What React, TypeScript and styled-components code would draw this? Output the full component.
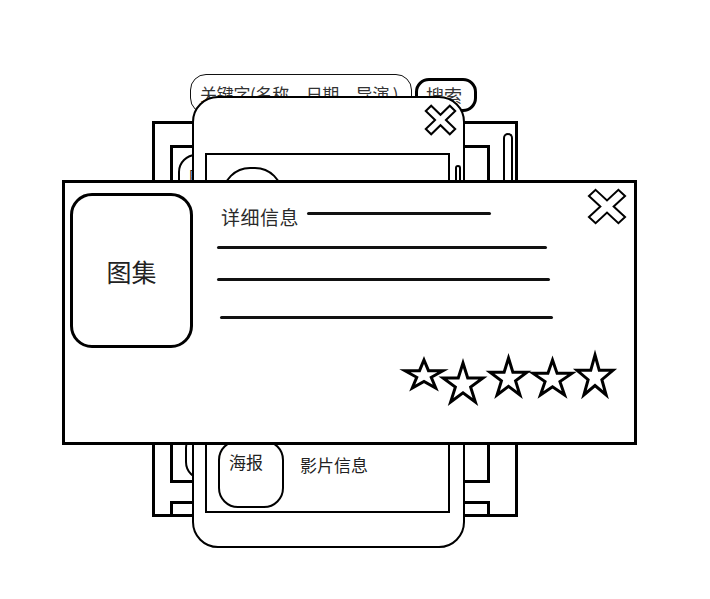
import React from "react";
import styled, { createGlobalStyle } from "styled-components";

const Global = createGlobalStyle`
  html, body { margin: 0; padding: 0; background: #fff; }
  body {
    font-family: "Noto Sans CJK SC", "Noto Sans", sans-serif;
    color: #222;
  }
`;

const Stage = styled.div`
  position: relative;
  width: 710px;
  height: 599px;
  overflow: hidden;
  background: #fff;
`;

/* ---------- base page (layer 1) ---------- */
const Page = styled.div`
  display: flex;
  flex-direction: column;
  padding-top: 74px;
`;

const SearchRow = styled.div`
  display: flex;
  align-items: flex-start;
  gap: 3px;
  margin-left: 190px;
`;

const SearchInput = styled.div`
  width: 222px;
  height: 40px;
  box-sizing: border-box;
  border: 1px solid #111;
  border-radius: 16px;
  padding-left: 9px;
  font-size: 17px;
  letter-spacing: -0.3px;
  line-height: 38px;
  white-space: nowrap;
  overflow: hidden;
  color: #333;
`;

const SearchButton = styled.div`
  margin-top: 4px;
  width: 62px;
  height: 34px;
  box-sizing: border-box;
  border: 3px solid #000;
  border-radius: 14px;
  font-size: 18px;
  line-height: 28px;
  padding-left: 8px;
  color: #333;
`;

const Frame = styled.div`
  margin: 7px 0 0 152px;
  width: 366px;
  height: 396px;
  box-sizing: border-box;
  border: 3px solid #000;
  display: flex;
  align-items: flex-start;
  padding: 21px 0 0 15px;
  overflow: hidden;
`;

const ResultList = styled.div`
  display: flex;
  flex-direction: column;
  gap: 18px;
  width: 320px;
  flex-shrink: 0;
`;

const ResultItem = styled.div<{ $h: number }>`
  height: ${(p) => p.$h}px;
  flex-shrink: 0;
  box-sizing: border-box;
  border: 3px solid #000;
  display: flex;
  flex-direction: column;
  align-items: flex-start;
`;

const Scrollbar = styled.div<{ $w: number; $h: number; $ml: number; $mt: number }>`
  flex-shrink: 0;
  width: ${(p) => p.$w}px;
  height: ${(p) => p.$h}px;
  margin-left: ${(p) => p.$ml}px;
  margin-top: ${(p) => p.$mt}px;
  box-sizing: border-box;
  border: 2px solid #000;
  border-bottom: none;
  border-radius: ${(p) => p.$w / 2}px ${(p) => p.$w / 2}px 0 0;
`;

const Poster = styled.div<{
  $w: number;
  $h: number;
  $ml: number;
  $mt: number;
  $r: number;
  $fs: number;
  $auto?: boolean;
}>`
  flex-shrink: 0;
  width: ${(p) => p.$w}px;
  height: ${(p) => p.$h}px;
  margin-left: ${(p) => p.$ml}px;
  margin-top: ${(p) => (p.$auto ? "auto" : `${p.$mt}px`)};
  box-sizing: border-box;
  border: 2px solid #000;
  border-radius: ${(p) => p.$r}px;
  background: #fff;
  font-size: ${(p) => p.$fs}px;
  line-height: 22px;
  padding: 9px 0 0 9px;
  color: #222;
`;

/* ---------- result modal (layer 2) ---------- */
const ResultModal = styled.div`
  position: absolute;
  left: 192px;
  top: 96px;
  width: 273px;
  height: 452px;
  box-sizing: border-box;
  border: 2px solid #000;
  border-radius: 26px;
  background: #fff;
  display: flex;
  flex-direction: column;
`;

const ModalHeader = styled.div<{ $pad: string }>`
  display: flex;
  justify-content: flex-end;
  padding: ${(p) => p.$pad};
`;

const ModalBody = styled.div`
  display: flex;
  align-items: flex-start;
  margin-top: 18px;
  padding-left: 11px;
`;

const ListBox = styled.div`
  width: 245px;
  height: 360px;
  box-sizing: border-box;
  border: 2px solid #000;
  display: flex;
  flex-direction: column;
  padding: 12px 0 3px;
`;

const MovieRow = styled.div<{ $auto?: boolean }>`
  display: flex;
  align-items: flex-start;
  margin-top: ${(p) => (p.$auto ? "auto" : "0")};
`;

const MovieInfo = styled.div`
  margin: 14px 0 0 16px;
  font-size: 17px;
  line-height: 22px;
  color: #222;
`;

/* ---------- detail modal (layer 3) ---------- */
const DetailModal = styled.div`
  position: absolute;
  left: 62px;
  top: 180px;
  width: 575px;
  height: 265px;
  box-sizing: border-box;
  border: 3px solid #000;
  background: #fff;
  display: flex;
  flex-direction: column;
  padding: 10px 0 0 5px;
`;

const DetailTop = styled.div`
  display: flex;
  align-items: flex-start;
`;

const Gallery = styled.div`
  width: 123px;
  height: 155px;
  box-sizing: border-box;
  border: 3px solid #000;
  border-radius: 22px;
  display: flex;
  align-items: center;
  justify-content: center;
  font-size: 25px;
  color: #222;
  flex-shrink: 0;
`;

const Details = styled.div`
  flex: 1;
  display: flex;
  flex-direction: column;
  align-items: flex-start;
  margin-left: 24px;
  padding-top: 12px;
`;

const TitleRow = styled.div`
  display: flex;
  align-items: center;
  margin-left: 4px;
`;

const Title = styled.span`
  font-size: 19px;
  letter-spacing: 0.5px;
  line-height: 24px;
  color: #2a2a2a;
`;

const Rule = styled.div<{ $w: number; $ml: number; $mt: number }>`
  width: ${(p) => p.$w}px;
  height: 3px;
  margin-left: ${(p) => p.$ml}px;
  margin-top: ${(p) => p.$mt}px;
  background: #111;
  border-radius: 1.5px;
  flex-shrink: 0;
`;

const CloseButton = styled.div<{ $w: number; $h: number; $mt: number; $mr: number }>`
  width: ${(p) => p.$w}px;
  height: ${(p) => p.$h}px;
  margin-top: ${(p) => p.$mt}px;
  margin-right: ${(p) => p.$mr}px;
  flex-shrink: 0;
  svg { display: block; width: 100%; height: 100%; overflow: visible; }
`;

const Stars = styled.div`
  display: flex;
  align-items: flex-start;
  justify-content: flex-end;
  margin-top: 7px;
  padding-right: 21px;
`;

const StarBox = styled.div<{ $w: number; $h: number; $ml: number; $mt: number }>`
  width: ${(p) => p.$w}px;
  height: ${(p) => p.$h}px;
  margin-left: ${(p) => p.$ml}px;
  margin-top: ${(p) => p.$mt}px;
  svg { display: block; width: 100%; height: 100%; overflow: visible; }
`;

const XIcon: React.FC<{ sw?: number }> = ({ sw = 2 }) => (
  <svg viewBox="0 0 40 40" preserveAspectRatio="none">
    <polygon
      points="8,1 20,13 32,1 39,8 27,20 39,32 32,39 20,27 8,39 1,32 13,20 1,8"
      fill="#fff"
      stroke="#000"
      strokeWidth={sw}
      strokeLinejoin="miter"
      vectorEffect="non-scaling-stroke"
    />
  </svg>
);

const StarIcon = () => (
  <svg viewBox="0 0 100 100" preserveAspectRatio="none">
    <polygon
      points="50,0 61.8,38.2 100,38.2 69.1,61.8 80.9,100 50,76.4 19.1,100 30.9,61.8 0,38.2 38.2,38.2"
      fill="#fff"
      stroke="#000"
      strokeWidth={3}
      strokeLinejoin="miter"
      vectorEffect="non-scaling-stroke"
    />
  </svg>
);

const stars = [
  { w: 38, h: 28, ml: 0, mt: 5 },
  { w: 40, h: 39, ml: 0, mt: 8 },
  { w: 37, h: 37, ml: 7, mt: 3 },
  { w: 39, h: 35, ml: 6, mt: 5 },
  { w: 36, h: 40, ml: 5, mt: 0 },
];

export default function App() {
  return (
    <>
      <Global />
      <Stage>
        <Page>
          <SearchRow>
            <SearchInput>关键字(名称、日期、导演 )</SearchInput>
            <SearchButton>搜索</SearchButton>
          </SearchRow>
          <Frame>
            <ResultList>
              <ResultItem $h={338}>
                <Poster $w={70} $h={130} $ml={5} $mt={6} $r={18} $fs={16}>
                  图片
                </Poster>
                <Poster $w={60} $h={50} $ml={12} $mt={0} $r={18} $fs={16} $auto />
              </ResultItem>
              <ResultItem $h={120}>
                <Poster $w={70} $h={100} $ml={12} $mt={6} $r={18} $fs={16} />
              </ResultItem>
            </ResultList>
            <Scrollbar $w={10} $h={80} $ml={13} $mt={-12} />
          </Frame>
        </Page>

        <ResultModal>
          <ModalHeader $pad="7px 7px 0 0">
            <CloseButton $w={31} $h={30} $mt={0} $mr={0}>
              <XIcon sw={2} />
            </CloseButton>
          </ModalHeader>
          <ModalBody>
            <ListBox>
              <MovieRow>
                <Poster $w={61} $h={110} $ml={15} $mt={0} $r={28} $fs={17} />
              </MovieRow>
              <MovieRow $auto>
                <Poster $w={66} $h={68} $ml={11} $mt={0} $r={20} $fs={17}>
                  海报
                </Poster>
                <MovieInfo>影片信息</MovieInfo>
              </MovieRow>
            </ListBox>
            <Scrollbar $w={6} $h={70} $ml={5} $mt={12} />
          </ModalBody>
        </ResultModal>

        <DetailModal>
          <DetailTop>
            <Gallery>图集</Gallery>
            <Details>
              <TitleRow>
                <Title>详细信息</Title>
                <Rule $w={184} $ml={8} $mt={-8} />
              </TitleRow>
              <Rule $w={330} $ml={0} $mt={17} />
              <Rule $w={333} $ml={0} $mt={29} />
              <Rule $w={333} $ml={3} $mt={35} />
            </Details>
            <CloseButton $w={38} $h={35} $mt={-4} $mr={8}>
              <XIcon sw={2} />
            </CloseButton>
          </DetailTop>
          <Stars>
            {stars.map((s, i) => (
              <StarBox key={i} $w={s.w} $h={s.h} $ml={s.ml} $mt={s.mt}>
                <StarIcon />
              </StarBox>
            ))}
          </Stars>
        </DetailModal>
      </Stage>
    </>
  );
}
